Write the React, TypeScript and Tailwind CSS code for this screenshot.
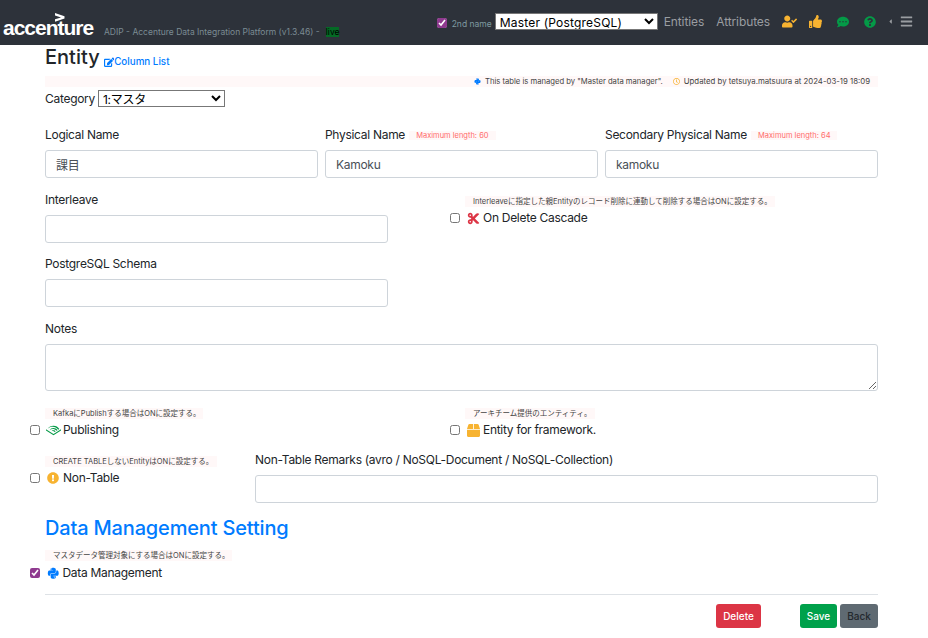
import React from "react";
import { FaUserCheck, FaThumbsUp, FaCommentDots, FaQuestionCircle, FaBars, FaCaretLeft, FaEdit, FaCut, FaRegClock, FaPython, FaExclamationCircle, FaBox, FaAudible } from "react-icons/fa";

function Hint({ children, className = "" }: { children: React.ReactNode; className?: string }) {
  return <div className={"h-[11px] bg-[#fff8f8] pl-2 text-[7.5px] leading-[11px] tracking-normal text-[#444] whitespace-nowrap " + className}>{children}</div>;
}

function Label({ children, className = "" }: { children: React.ReactNode; className?: string }) {
  return <label className={"block text-[12px] leading-[16px] text-[#212529] " + className}>{children}</label>;
}

function TextInput({ value = "", className = "" }: { value?: string; className?: string }) {
  return (
    <input
      readOnly
      value={value}
      className={"block h-[28px] w-full rounded-[3px] border border-[#ced4da] bg-white px-[10px] text-[12px] text-[#495057] " + className}
    />
  );
}

function Check({ checked = false }: { checked?: boolean }) {
  return <input type="checkbox" readOnly checked={checked} className="h-[10px] w-[10px] accent-[#8f3a8f]" />;
}

function Max({ children }: { children: React.ReactNode }) {
  return <span className="ml-[1px] inline-block h-[9px] bg-[#fff8f8] px-[7px] align-middle text-[7.5px] leading-[9px] tracking-normal text-[#ff6b6b]">{children}</span>;
}

export default function App() {
  return (
    <div className="min-h-[638px] w-[928px] overflow-hidden bg-white font-['Inter','Noto_Sans_CJK_JP',sans-serif] tracking-[-0.29px] text-[#212529]">
      <header className="flex h-[45px] items-center bg-[#2d323a] tracking-normal">
        <div className="relative ml-[3px] h-[20px] w-[93px] font-['Liberation_Sans',sans-serif] text-[21px] font-bold leading-[20px] tracking-[-1px] text-white">
          <svg className="absolute left-[52px] top-0" width="10" height="9" viewBox="0 0 10 9">
            <path d="M0 0 L9.5 3.2 V5.6 L0 8.8 V6.3 L6 4.4 L0 2.5 Z" fill="#fff" />
          </svg>
          <span className="relative top-[5px]">accenture</span>
        </div>
        <span className="mb-[7px] ml-[8px] self-end text-[8.5px] leading-[11px] text-[#7b8b93]">ADIP - Accenture Data Integration Platform (v1.3.46) -</span>
        <span className="mb-[8px] ml-[6px] self-end bg-[#046a25] text-[8.5px] leading-[10px] text-black">live</span>
        <div className="mb-[2px] ml-auto flex items-center">
          <input type="checkbox" readOnly checked className="mt-[2px] h-[10px] w-[10px] accent-[#8f3a8f]" />
          <span className="ml-[5px] mt-[5px] text-[8.5px] text-[#7f9aa0]">2nd name</span>
          <select className="ml-[3px] h-[17px] w-[163px] border border-[#777] bg-white pl-0 text-[12px] tracking-[0.2px] text-black">
            <option>Master (PostgreSQL)</option>
          </select>
          <span className="ml-[6px] text-[12px] tracking-[-0.1px] text-[#9a9da1]">Entities</span>
          <span className="ml-[12px] text-[12px] tracking-[-0.1px] text-[#9a9da1]">Attributes</span>
          <FaUserCheck className="ml-[12px] text-[15px] text-[#f7b331]" />
          <FaThumbsUp className="ml-[12px] text-[13px] text-[#f7b331]" />
          <FaCommentDots className="ml-[15px] text-[12px] text-[#049a47]" />
          <FaQuestionCircle className="ml-[15px] text-[12px] text-[#049a47]" />
          <FaCaretLeft className="ml-[11px] text-[7px] text-[#9a9da1]" />
          <FaBars className="ml-[6px] mr-[15px] text-[13px] text-[#9a9da1]" />
        </div>
      </header>

      <main className="ml-[45px] w-[833px]">
        <div className="flex h-[31px] items-end pb-[7px]">
          <h1 className="text-[20px] font-medium leading-[24px] tracking-normal">Entity</h1>
          <a className="mb-[-1px] ml-[4px] flex items-center text-[9.8px] font-medium tracking-normal text-[#007bff]">
            <FaEdit className="text-[10.5px]" />Column List
          </a>
        </div>
        <div className="flex h-[11px] items-center justify-end bg-[#fff8f8] pr-[8px] text-[7.8px] leading-[11px] tracking-normal text-[#444]">
          <FaPython className="mr-[4px] text-[7px] text-[#007bff]" />
          <span className="text-[7.65px]">This table is managed by "Master data manager".</span>
          <FaRegClock className="ml-[10px] mr-[4px] text-[7px] text-[#f7b331]" />
          <span>Updated by tetsuya.matsuura at 2024-03-19 18:09</span>
        </div>
        <div className="mt-[3px] flex h-[17px] items-center text-[12px]">
          <span>Category</span>
          <select className="ml-[3px] h-[17px] w-[127px] border border-[#777] bg-white pl-0 text-[12px] text-black">
            <option>1:マスタ</option>
          </select>
        </div>

        <div className="mt-[20px] flex gap-[7px]">
          <div className="w-[273px]">
            <Label>Logical Name</Label>
            <TextInput value="課目" className="mt-[7px]" />
          </div>
          <div className="w-[273px]">
            <Label>Physical Name <Max>Maximum length: 60</Max></Label>
            <TextInput value="Kamoku" className="mt-[7px]" />
          </div>
          <div className="w-[273px]">
            <Label>Secondary Physical Name <Max>Maximum length: 64</Max></Label>
            <TextInput value="kamoku" className="mt-[7px]" />
          </div>
        </div>

        <div className="mt-[14px] flex">
          <div className="w-[343px]">
            <Label>Interleave</Label>
            <TextInput className="mt-[7px]" />
          </div>
          <div className="ml-[62px] w-[330px]">
            <Hint className="ml-[15px] mt-[4px] w-[310px]">Interleaveに指定した親Entityのレコード削除に連動して削除する場合はONに設定する。</Hint>
            <div className="mt-[3px] flex h-[16px] items-center text-[12px]">
              <Check />
              <FaCut className="ml-[7px] text-[13px] text-[#dc3545]" />
              <span className="ml-[3px]">On Delete Cascade</span>
            </div>
          </div>
        </div>

        <div className="mt-[13px] w-[343px]">
          <Label>PostgreSQL Schema</Label>
          <TextInput className="mt-[7px]" />
        </div>

        <div className="mt-[14px]">
          <Label>Notes</Label>
          <textarea readOnly className="mt-[7px] block h-[47px] w-full rounded-[3px] border border-[#ced4da] bg-white" />
        </div>

        <div className="mt-[17px] flex">
          <div className="ml-[-15px] w-[420px]">
            <Hint className="ml-[15px] w-[158px]">KafkaにPublishする場合はONに設定する。</Hint>
            <div className="mt-[3px] flex h-[16px] items-center text-[12px]">
              <Check />
              <FaAudible className="ml-[6px] text-[15px] text-[#049a47]" />
              <span className="ml-[2px]">Publishing</span>
            </div>
          </div>
          <div className="w-[200px]">
            <Hint className="ml-[15px] w-[130px]">アーキチーム提供のエンティティ。</Hint>
            <div className="mt-[3px] flex h-[16px] items-center text-[12px]">
              <Check />
              <FaBox className="ml-[7px] text-[13px] text-[#f7b331]" />
              <span className="ml-[3px]">Entity for framework.</span>
            </div>
          </div>
        </div>

        <div className="mt-[14px] flex">
          <div className="ml-[-15px] w-[225px]">
            <Hint className="ml-[15px] mt-[4px] w-[172px]">CREATE TABLEしないEntityはONに設定する。</Hint>
            <div className="mt-[3px] flex h-[16px] items-center text-[12px]">
              <Check />
              <FaExclamationCircle className="ml-[7px] text-[12px] text-[#f7b331]" />
              <span className="ml-[4px]">Non-Table</span>
            </div>
          </div>
          <div className="w-[623px]">
            <Label>Non-Table Remarks (avro / NoSQL-Document / NoSQL-Collection)</Label>
            <TextInput className="mt-[7px]" />
          </div>
        </div>

        <h2 className="mt-[12px] text-[20px] font-medium leading-[26px] tracking-[-0.17px] text-[#007bff]">Data Management Setting</h2>

        <div className="ml-[-15px] mt-[9px]">
          <Hint className="ml-[15px] w-[187px]">マスタデータ管理対象にする場合はONに設定する。</Hint>
          <div className="mt-[4px] flex h-[16px] items-center text-[12px]">
            <Check checked />
            <FaPython className="ml-[7px] text-[12.5px] text-[#007bff]" />
            <span className="ml-[3px]">Data Management</span>
          </div>
        </div>

        <hr className="mt-[13px] border-t border-[#dee2e6]" />

        <div className="mt-[9px] flex tracking-normal">
          <button className="ml-[671px] h-[24px] w-[45px] rounded-[3px] bg-[#dc3545] text-[10px] font-medium text-white">Delete</button>
          <button className="ml-[39px] h-[24px] w-[37px] rounded-[3px] bg-[#00a14b] text-[10px] font-medium text-white">Save</button>
          <button className="ml-[3px] h-[24px] w-[38px] rounded-[3px] bg-[#5f6a72] text-[10px] font-medium text-[#23282d]">Back</button>
        </div>
      </main>
    </div>
  );
}
